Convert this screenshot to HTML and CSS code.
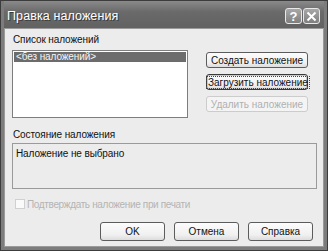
FILE: index.html
```html
<!DOCTYPE html>
<html lang="ru">
<head>
  <meta charset="utf-8" />
  <title>Правка наложения</title>
  <link rel="stylesheet" href="styles.css">
</head>
<body>
  <div class="window">
    <!-- title bar -->
    <div class="titlebar">
      <span class="title">Правка наложения</span>
      <span class="tb-btns">
        <span class="tb-btn">?</span>
        <span class="tb-btn">
          <svg width="11" height="11" viewBox="0 0 11 11"><path d="M1.5 1.5 L9.5 9.5 M9.5 1.5 L1.5 9.5" stroke="#fff" stroke-width="2" fill="none"/></svg>
        </span>
      </span>
    </div>

    <div class="client">
      <div class="label">Список наложений</div>
      <div class="list-row">
        <div class="listbox">
          <div class="item sel">&lt;без наложений&gt;</div>
        </div>
        <div class="side-btns">
          <button class="btn wide">Создать наложение</button>
          <button class="btn wide focus"><span>Загрузить наложение</span></button>
          <button class="btn wide" disabled>Удалить наложение</button>
        </div>
      </div>

      <div class="label status-label">Состояние наложения</div>
      <div class="status">Наложение не выбрано</div>

      <label class="check disabled">
        <span class="box"></span>
        <span class="check-text">Подтверждать наложение при печати</span>
      </label>

      <div class="footer">
        <button class="btn">OK</button>
        <button class="btn">Отмена</button>
        <button class="btn">Справка</button>
      </div>
    </div>
  </div>
</body>
</html>
```
FILE: styles.css
```css
*{box-sizing:border-box;margin:0;padding:0;}

body{
  width:328px;
  height:251px;
  background:#d4d4d4;
  font-family:"Liberation Sans",Arial,sans-serif;
  font-size:10px;
  letter-spacing:-.1px;
  color:#111;
  white-space:nowrap;
}

.window{
  width:328px;
  height:251px;
  border:1px solid #3c3c3c;
  background:#7c7c7c;
  padding:0 3px 3px;
  display:flex;
  flex-direction:column;
}

/* title bar */
.titlebar{
  height:27px;
  display:flex;
  align-items:center;
  justify-content:space-between;
  padding:3px 4px 0 3px;
  background:linear-gradient(#8a8a8a,#6a6a6a 40%,#626262);
}
.title{
  color:#fff;
  font-size:12.5px;
  letter-spacing:.1px;
  text-shadow:1px 1px 0 #3a3a3a;
}
.tb-btns{display:flex;gap:1px;}
.tb-btn{
  width:17px;
  height:16px;
  border:1px solid #e8e8e8;
  border-radius:3px;
  background:linear-gradient(#a8a8a8,#7e7e7e);
  color:#fff;
  font-weight:bold;
  font-size:13px;
  display:flex;
  align-items:center;
  justify-content:center;
}

.client{
  flex:1;
  background:#ececec;
  border:1px solid #9a9a9a;
  padding:5px 8px 0 7px;
  display:flex;
  flex-direction:column;
}

.label{height:12px;line-height:12px;margin-left:1px;}

.list-row{
  display:flex;
  justify-content:space-between;
  margin-top:4px;
}
.listbox{
  width:176px;
  height:68px;
  background:#fff;
  border:1px solid #7e7e7e;
  padding:1px;
}
.item{height:10px;line-height:10px;padding-left:2px;}
.item.sel{background:#6c6c6c;color:#f4f4f4;}

.side-btns{
  display:flex;
  flex-direction:column;
  gap:6px;
  margin-top:2px;
  margin-right:7px;
}

.btn{
  font:inherit;
  color:#111;
  height:16px;
  width:65px;
  border:1px solid #5c5c5c;
  border-radius:3px;
  background:linear-gradient(#fcfcfc,#f0f0f0 70%,#dcdcdc);
}
.btn.wide{width:102px;}
.btn.focus{border-color:#3a3a3a;box-shadow:inset 0 0 0 1px #c8c8c8;}
.btn.focus span{outline:1px dotted #444;outline-offset:0;padding:0 1px;}
.btn:disabled{
  color:#b0b0b0;
  border-color:#cccccc;
  background:#f4f4f4;
}

.status-label{margin-top:11px;}
.status{
  margin-top:2px;
  height:46px;
  width:305px;
  border:1px solid #9a9a9a;
  padding:5px 3px;
  line-height:10px;
}

.check{
  display:flex;
  align-items:center;
  gap:2px;
  margin-top:10px;
  margin-left:3px;
  height:10px;
}
.check .box{
  width:10px;
  height:10px;
  border:1px solid #d0d0d0;
  background:#fafafa;
}
.check-text{letter-spacing:-.35px;}
.check.disabled{color:#b4b4b4;}

.footer{
  display:flex;
  justify-content:flex-end;
  gap:9px;
  margin-top:13px;
  margin-right:2px;
}
.footer .btn{height:19px;}
```
